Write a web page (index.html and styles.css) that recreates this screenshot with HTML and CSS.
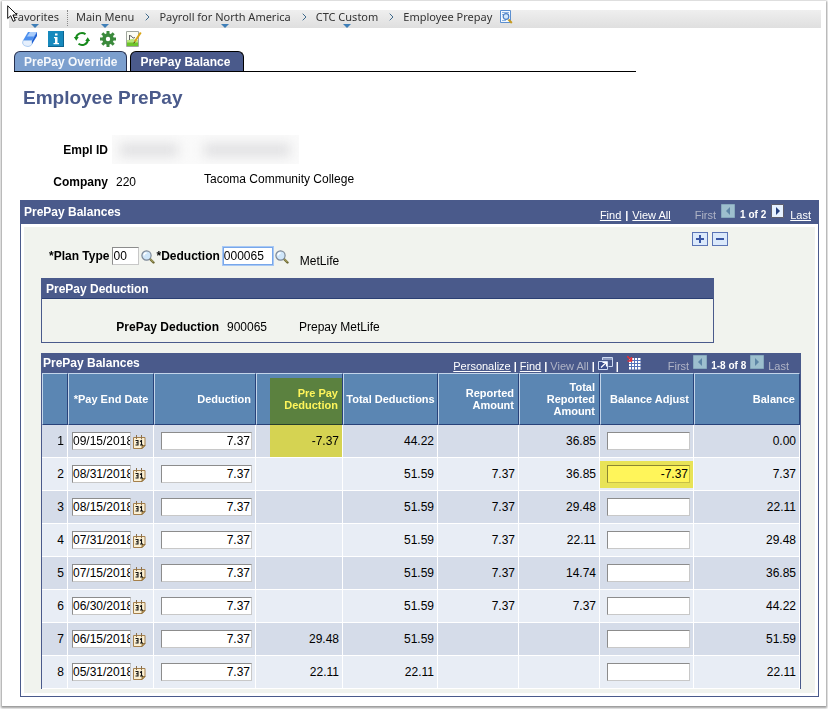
FILE: index.html
```html
<!DOCTYPE html>
<html lang="en">
<head>
<meta charset="utf-8">
<title>Employee PrePay</title>
<link rel="stylesheet" href="styles.css">
</head>
<body>
<svg class="defs" aria-hidden="true">
  <symbol id="lens" viewBox="0 0 14 14">
    <path d="M8.5 8.500 12.500 12.500" stroke="#6f6a34" stroke-width="2.400" stroke-linecap="round"/>
    <path d="M9 8.600 12.400 12" stroke="#c9c27a" stroke-width=".8"/>
    <circle cx="5.500" cy="5.500" r="4.600" fill="#cfe6fa" stroke="#7c8797" stroke-width="1.200"/>
    <path d="M3 5.500A2.600 2.600 0 0 1 5.600 3" fill="none" stroke="#fff" stroke-width="1.400"/>
  </symbol>
  <symbol id="cal" viewBox="0 0 13 14">
    <path d="M.5 2.500h11.500v8l-3 3H.5z" fill="#fbf0d3" stroke="#a5804c"/>
    <path d="M12 10.500H9v3z" fill="#c9a263" stroke="#80622f" stroke-width=".8"/>
    <path d="M3.500 0v4M8.500 0v4" stroke="#8a6f4a"/>
    <path d="M2.500 5.500H5v4.500H2.500M3 7.700h2M7 6.500 8.500 5.500V10M7 10h3" fill="none" stroke="#111" stroke-width="1.100"/>
  </symbol>
  <symbol id="prev" viewBox="0 0 14 14">
    <path d="M.5.5h13v13H.5z" fill="#9dbfce" stroke="#86a9bd"/>
    <path d="M9 3v8L5 7z" fill="#5e86a6"/>
  </symbol>
  <symbol id="next-off" viewBox="0 0 14 14">
    <path d="M.5.5h13v13H.5z" fill="#9dbfce" stroke="#86a9bd"/>
    <path d="M5 3v8l4-4z" fill="#5e86a6"/>
  </symbol>
  <symbol id="next" viewBox="0 0 14 14">
    <path d="M.5.5h12v13H.5z" fill="#e6f1ff" stroke="#5d5d6b"/>
    <path d="M5 3v8l4-4z" fill="#26417f"/>
  </symbol>
</svg>
<div class="frame">
  <svg class="pointer" viewBox="0 0 12 18" aria-hidden="true"><path d="M.7.8v12.700l3-2.800 2.400 5.600 2.200-.9-2.400-5.400h4.200z" fill="#fff" stroke="#111"/></svg>
  <nav class="crumbs" aria-label="Breadcrumb">
    <a class="crumb menu fav" href="#">Favorites</a>
    <a class="crumb menu" href="#">Main Menu</a>
    <svg class="sep" viewBox="0 0 5 8"><path d="M.7.7 4 4 .7 7.300" fill="none" stroke="#3f6a8c"/></svg>
    <a class="crumb menu" href="#">Payroll for North America</a>
    <svg class="sep" viewBox="0 0 5 8"><path d="M.7.7 4 4 .7 7.300" fill="none" stroke="#3f6a8c"/></svg>
    <a class="crumb menu" href="#">CTC Custom</a>
    <svg class="sep" viewBox="0 0 5 8"><path d="M.7.7 4 4 .7 7.300" fill="none" stroke="#3f6a8c"/></svg>
    <a class="crumb" href="#">Employee Prepay</a>
    <svg class="find-page" viewBox="0 0 13 14"><path d="M.5.5h10v12H.5z" fill="#f4f9ff" stroke="#5b8fd0"/><path d="M2 2.500h7M2 4.500h2M2 10.500h4" stroke="#8ab2e2"/><circle cx="6" cy="6.500" r="2.800" fill="#d4e8fb" stroke="#4b7fc4" stroke-width="1.200"/><path d="m8.500 9.500 3.300 3.500" stroke="#c79a1e" stroke-width="2"/></svg>
  </nav>

  <div class="tools">
    <button aria-label="Clear"><svg viewBox="0 0 16 16"><path d="M6 1h9L10 9.500H1z" fill="#4d90ee"/><path d="M8 1h7l-3 4.500H5z" fill="#a9ccfa"/><path d="M1 9.500h9v3.500Q9 15.500 6 15.500 1 15 .6 12z" fill="#e6f0fd" stroke="#9cc0ee" stroke-width=".8"/><path d="M15 1v4l-5 8V9.500z" fill="#1d5fd2"/></svg></button>
    <button aria-label="Information"><svg viewBox="0 0 16 16"><path d="M0 0h16v15H0z" fill="#1689bd"/><path d="M0 15h16v1H0zM15 0h1v16h-1z" fill="#0c6490"/><path d="M7 2.500h2.500v2H7zM6 6h3.500v6H11v1.200H5.500V12H7V7.200H6z" fill="#fff"/></svg></button>
    <button aria-label="Refresh"><svg viewBox="0 0 16 16"><path d="M2 7A6 6 0 0 1 11.500 3.200M14 9A6 6 0 0 1 4.500 12.800" fill="none" stroke="#178a1c" stroke-width="2"/><path d="M-.2 6h5L2.300 9.800zM11.200 10h5l-2.500-3.800z" fill="#178a1c"/></svg></button>
    <button aria-label="Settings"><svg viewBox="0 0 16 16"><circle cx="8" cy="8" r="4" fill="none" stroke="#3b8a3c" stroke-width="3.600"/><path d="M8 0v3M8 13v3M0 8h3M13 8h3M2.300 2.300l2.200 2.200M11.500 11.500l2.200 2.200M2.300 13.700l2.200-2.200M11.500 4.500l2.200-2.200" stroke="#3b8a3c" stroke-width="3"/></svg></button>
    <button aria-label="Edit chart"><svg viewBox="0 0 16 16"><path d="M.5.5h12v15H.5z" fill="#fbfdf4" stroke="#a0a79e"/><path d="M1 9.500h11V15H1z" fill="#6cc52b"/><path d="M1 9.500q5-3 11 0v2H1z" fill="#b7e67b"/><path d="M3.500 4v5M3.500 5q2-1 2.500 1t3 .5" fill="none" stroke="#555" stroke-width=".9"/><path d="m14.800 1.500-6 9" stroke="#d9a514" stroke-width="2"/><path d="m8.800 10.500-1 1.800" stroke="#5a3b0a"/></svg></button>
  </div>

  <div class="tabs">
    <a class="tab" href="#">PrePay Override</a>
    <a class="tab active" href="#">PrePay Balance</a>
  </div>

  <main>
    <h1>Employee PrePay</h1>
    <div class="employee">
      <b>Empl ID</b><div class="redacted"><i></i><i class="wide"></i></div>
    </div>
    <div class="company">
      <b>Company</b><span>220</span><span class="desc">Tacoma Community College</span>
    </div>

    <section class="panel">
      <div class="bar bar-main">
        <h2>PrePay Balances</h2>
        <div class="pager">
          <a href="#">Find</a><span class="pipe">|</span><a href="#">View All</a>
          <span class="off first">First</span>
          <svg class="arrow"><use href="#prev"/></svg>
          <b>1 of 2</b>
          <svg class="arrow"><use href="#next"/></svg>
          <a href="#">Last</a>
        </div>
      </div>
      <div class="inner">
        <div class="row-buttons">
          <button aria-label="Add row"><svg viewBox="0 0 10 10"><path d="M1 5h8M5 1v8" stroke="#3a56a5" stroke-width="2"/></svg></button>
          <button aria-label="Delete row"><svg viewBox="0 0 10 10"><path d="M1 5h8" stroke="#3a56a5" stroke-width="2"/></svg></button>
        </div>
        <div class="plan">
          <label for="plan">*Plan Type</label><input id="plan" class="plan-type" value="00">
          <svg class="lens"><use href="#lens"/></svg>
          <label for="ded">*Deduction</label><input id="ded" class="plan-ded" value="000065">
          <svg class="lens"><use href="#lens"/></svg>
          <span class="plan-name">MetLife</span>
        </div>

        <section class="deduction">
          <h2>PrePay Deduction</h2>
          <div class="deduction-row"><b>PrePay Deduction</b><span>900065</span><span>Prepay MetLife</span></div>
        </section>

        <section class="grid">
          <div class="bar bar-grid">
            <h2>PrePay Balances</h2>
            <div class="pager">
              <a href="#">Personalize</a><span class="pipe">|</span><a href="#">Find</a><span class="pipe">|</span><span class="off">View All</span><span class="pipe">|</span>
              <svg class="popout" viewBox="0 0 15 13"><path d="M4.500 3V.5h10v9h-4" fill="none" stroke="#cfdcf3"/><path d="M4 2h11" stroke="#cfdcf3"/><path d="M.5 4.500h9v8h-9z" fill="#3c4f8c" stroke="#cfdcf3"/><path d="M3 10.500 8 5.800M4.500 5.500h4v4" fill="none" stroke="#fff" stroke-width="1.200"/></svg>
              <span class="pipe">|</span>
              <svg class="sheet" viewBox="0 0 14 14"><path d="M2 2h11.500v11.500H2z" fill="#fff"/><path d="M4.500 2v12M7.500 2v12M10.500 2v12M2 4.500h12M2 7.500h12M2 10.500h12" stroke="#5572ba"/><path d="M0 0l4 4M4.500 1v4h-4" fill="none" stroke="#e0303a" stroke-width="1.600"/></svg>
              <span class="off first-grid">First</span>
              <svg class="arrow"><use href="#prev"/></svg>
              <b>1-8 of 8</b>
              <svg class="arrow"><use href="#next-off"/></svg>
              <span class="off">Last</span>
            </div>
          </div>
          <table>
            <colgroup><col class="c-num"><col class="c-date"><col class="c-ded"><col class="c-pre"><col class="c-total"><col class="c-rep"><col class="c-rep"><col class="c-adj"><col></colgroup>
            <thead>
              <tr><th></th><th class="mid">*Pay End Date</th><th>Deduction</th><th>Pre Pay<br>Deduction</th><th class="mid">Total Deductions</th><th>Reported Amount</th><th>Total Reported Amount</th><th>Balance Adjust</th><th>Balance</th></tr>
            </thead>
            <tbody>
              <tr><td>1</td><td class="date"><input aria-label="Pay end date 1" value="09/15/2018"><svg><use href="#cal"/></svg></td><td class="num"><input aria-label="Deduction 1" value="7.37"></td><td class="mark-pre">-7.37</td><td>44.22</td><td></td><td>36.85</td><td class="num"><input aria-label="Balance adjust 1"></td><td>0.00</td></tr>
              <tr><td>2</td><td class="date"><input aria-label="Pay end date 2" value="08/31/2018"><svg><use href="#cal"/></svg></td><td class="num"><input aria-label="Deduction 2" value="7.37"></td><td></td><td>51.59</td><td>7.37</td><td>36.85</td><td class="num mark-adj"><input aria-label="Balance adjust 2" value="-7.37"></td><td>7.37</td></tr>
              <tr><td>3</td><td class="date"><input aria-label="Pay end date 3" value="08/15/2018"><svg><use href="#cal"/></svg></td><td class="num"><input aria-label="Deduction 3" value="7.37"></td><td></td><td>51.59</td><td>7.37</td><td>29.48</td><td class="num"><input aria-label="Balance adjust 3"></td><td>22.11</td></tr>
              <tr><td>4</td><td class="date"><input aria-label="Pay end date 4" value="07/31/2018"><svg><use href="#cal"/></svg></td><td class="num"><input aria-label="Deduction 4" value="7.37"></td><td></td><td>51.59</td><td>7.37</td><td>22.11</td><td class="num"><input aria-label="Balance adjust 4"></td><td>29.48</td></tr>
              <tr><td>5</td><td class="date"><input aria-label="Pay end date 5" value="07/15/2018"><svg><use href="#cal"/></svg></td><td class="num"><input aria-label="Deduction 5" value="7.37"></td><td></td><td>51.59</td><td>7.37</td><td>14.74</td><td class="num"><input aria-label="Balance adjust 5"></td><td>36.85</td></tr>
              <tr><td>6</td><td class="date"><input aria-label="Pay end date 6" value="06/30/2018"><svg><use href="#cal"/></svg></td><td class="num"><input aria-label="Deduction 6" value="7.37"></td><td></td><td>51.59</td><td>7.37</td><td>7.37</td><td class="num"><input aria-label="Balance adjust 6"></td><td>44.22</td></tr>
              <tr><td>7</td><td class="date"><input aria-label="Pay end date 7" value="06/15/2018"><svg><use href="#cal"/></svg></td><td class="num"><input aria-label="Deduction 7" value="7.37"></td><td>29.48</td><td>51.59</td><td></td><td></td><td class="num"><input aria-label="Balance adjust 7"></td><td>51.59</td></tr>
              <tr><td>8</td><td class="date"><input aria-label="Pay end date 8" value="05/31/2018"><svg><use href="#cal"/></svg></td><td class="num"><input aria-label="Deduction 8" value="7.37"></td><td>22.11</td><td>22.11</td><td></td><td></td><td class="num"><input aria-label="Balance adjust 8"></td><td>22.11</td></tr>
            </tbody>
          </table>
        </section>
      </div>
    </section>
  </main>
</div>
</body>
</html>
```
FILE: styles.css
```css
* { box-sizing: border-box; }
body {
  margin: 0;
  padding: 1px 2px 3px;
  background: #fff;
  color: #000;
  font: 12px/14px "Liberation Sans", Arial, sans-serif;
}
svg { display: block; flex: none; }
h1, h2 { margin: 0; }
button { padding: 0; border: 0; background: none; }
.defs { position: absolute; width: 0; height: 0; }

.frame {
  position: relative;
  padding: 9px 0;
  background: #fff;
  box-shadow: 0 1px 2px 1px rgba(0, 0, 0, .4);
}
.pointer { position: absolute; left: 5px; top: 4px; width: 12px; height: 18px; z-index: 2; }

.crumbs {
  display: flex;
  align-items: center;
  height: 18px;
  margin: 0 5px 0 7px;
  padding: 0 0 4px 3px;
  background: linear-gradient(#efefef, #dfdfdf);
  font: 11px/14px "Noto Sans", sans-serif;
}
.crumb { position: relative; color: #333; text-decoration: none; white-space: nowrap; }
.menu::after {
  content: "";
  position: absolute;
  left: 50%;
  top: 14px;
  margin-left: -4px;
  border: 4px solid transparent;
  border-top-color: #3f7fb8;
  border-bottom: 0;
}
.fav { margin-right: 17px; }
.fav::before {
  content: "";
  position: absolute;
  right: -9px;
  top: 0;
  height: 16px;
  border-left: 1px dotted #888;
}
.sep { width: 5px; height: 8px; margin: 0 9px 0 11px; }
.find-page { width: 13px; height: 14px; margin-left: 8px; }

.tools { display: flex; gap: 10px; padding: 3px 0 4px 20px; }
.tools button, .tools svg { width: 16px; height: 16px; }

.tabs { display: flex; gap: 3px; width: 622px; max-width: 100%; margin-left: 12px; border-bottom: 1px solid #000; }
.tab {
  height: 20px;
  padding: 3px 9px 0;
  border: 1px solid #26304f;
  border-bottom: 0;
  border-radius: 6px 6px 0 0;
  background: #7c9fce;
  color: #f4f7fb;
  font-weight: bold;
  text-decoration: none;
  white-space: nowrap;
}
.tab.active { padding-right: 13px; background: #4a5a8b; border-color: #000; color: #fff; }

main { padding: 14px 7px 0 18px; }
h1 { padding-left: 3px; color: #4a5a8b; font-size: 19px; line-height: 24px; }
.employee { display: flex; align-items: center; gap: 4px; margin-top: 25px; }
.employee b, .company b { width: 88px; text-align: right; }
.redacted { display: flex; align-items: center; gap: 26px; width: 187px; height: 29px; padding: 0 8px; background: #fafafa; overflow: hidden; }
.redacted i { width: 58px; height: 12px; background: #dedee0; filter: blur(6px); }
.redacted .wide { width: 86px; }
.company { display: flex; align-items: flex-end; gap: 8px; height: 17px; margin-top: 8px; }
.company span { width: 80px; }
.company .desc { width: auto; align-self: flex-start; }

.panel { margin-top: 11px; border: 1px solid #4a5a8b; border-top: 0; }
h2 { font-size: 12px; line-height: 14px; color: #fff; white-space: nowrap; }
.bar { display: flex; justify-content: space-between; background: #4a5a8b; }
.bar-main { height: 24px; padding: 5px 7px 0 3px; }
.bar-grid { height: 20px; padding: 3px 11px 0 1px; }
.pager { display: flex; align-items: center; gap: 5px; color: #fff; font-size: 11px; line-height: 14px; white-space: nowrap; height: 14px; margin-top: 3px; }
.bar-grid .pager { gap: 4px; }
.pager a { color: #fff; }
.pager b { font-size: 10px; }
.pager .pipe { font-weight: bold; margin: 0 -1px; }
.pager .off { color: #b0b4c6; }
.first { margin-left: 19px; }
.first-grid { margin-left: 23px; }
.arrow { width: 14px; height: 14px; align-self: flex-start; margin-top: -4px; }
.popout { width: 15px; height: 13px; margin-top: -6px; }
.sheet { width: 14px; height: 14px; margin: -6px 0 0 5px; }

.inner { margin: 3px; padding: 5px 14px 4px 17px; background: #f1f3ee; }
.row-buttons { display: flex; justify-content: flex-end; gap: 4px; padding-right: 73px; }
.row-buttons button { display: grid; place-items: center; width: 16px; height: 14px; border: 1px solid #5b74b5; background: #dbe9fb; }
.row-buttons svg { width: 10px; height: 10px; }
input {
  height: 18px;
  padding: 0 1px 0 0;
  border: 1px solid #c8c8c8;
  border-top-color: #8c8c8c;
  border-left-color: #8c8c8c;
  border-radius: 0;
  background: #fff;
  color: #000;
  font: 12px/14px "Liberation Sans", Arial, sans-serif;
}
.plan { display: flex; align-items: center; height: 24px; padding: 0 0 4px 8px; }
.plan label { font-weight: bold; white-space: nowrap; }
.plan-type { width: 27px; margin-left: 3px; }
.plan-ded { width: 50px; margin-left: 3px; border-color: #78a7ea; box-shadow: 0 0 0 1px #a8c8f4; }
.lens { width: 14px; height: 14px; margin: 2px 1px 0 2px; }
.plan-name { margin: 10px 0 0 10px; }

.deduction { margin: 8px 87px 0 0; border: 1px solid #4a5a8b; }
.deduction h2 { padding: 3px 4px 2px; border: 1px solid #2b3f74; border-width: 0 0 1px; background: #4a5a8b; }
.deduction-row { display: flex; gap: 8px; padding: 21px 0 8px; }
.deduction-row b { width: 177px; text-align: right; }
.deduction-row span:nth-child(2) { width: 64px; }

.grid { margin-top: 10px; border: 1px solid #4a5a8b; border-width: 0 1px; }
table { width: 100%; border-collapse: separate; border-spacing: 0; table-layout: fixed; }
.c-num { width: 26px; }
.c-date { width: 86px; }
.c-ded { width: 102px; }
.c-pre { width: 87px; }
.c-total { width: 95px; }
.c-rep { width: 81px; }
.c-adj { width: 94px; }
th {
  height: 52px;
  padding: 0 4px;
  border: 1px solid #c3d5ea;
  border-right-color: #28427a;
  border-bottom-color: #28427a;
  background: #5b86b3;
  color: #fff;
  font-size: 11px;
  line-height: 12px;
  text-align: right;
}
th.mid { padding: 0 1px; text-align: center; white-space: nowrap; }
td {
  position: relative;
  height: 33px;
  padding: 0 3px;
  border: 1px solid #fff;
  border-width: 0 1px 1px 0;
  background: #d5dce9;
  text-align: right;
}
tr:nth-child(even) td { background: #e8edf5; }
td input, td svg { display: inline-block; vertical-align: middle; }
td.date { padding: 0 0 0 4px; text-align: left; white-space: nowrap; }
.date input { width: 59px; padding: 0; }
.date svg { width: 13px; height: 14px; margin: 1px 0 0 2px; }
td.num { padding: 0 3px 0 7px; }
.num input { width: 100%; text-align: right; }
.mark-pre::after, .mark-adj::after {
  content: "";
  position: absolute;
  background: #fff55a;
  mix-blend-mode: multiply;
  pointer-events: none;
}
.mark-pre::after { left: 14px; right: 0; top: -47px; bottom: 0; }
.mark-adj::after { left: 0; right: 0; top: 3px; bottom: 2px; }
```
